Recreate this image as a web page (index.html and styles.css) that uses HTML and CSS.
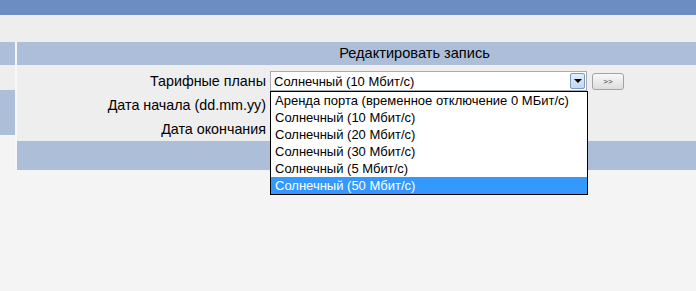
FILE: index.html
```html
<!DOCTYPE html>
<html lang="ru">
<head>
    <meta charset="UTF-8">
    <title>Редактировать запись</title>
    <link rel="stylesheet" href="styles.css">
</head>
<body>
    <div class="topbar"></div>
    <div class="band"></div>

    <div class="layout">
        <div class="side">
            <div class="side-head"></div>
            <div class="side-gap"></div>
            <div class="side-block"></div>
        </div>

        <div class="main">
            <div class="main-head">Редактировать запись</div>

            <div class="form">
                <div class="row">
                    <div class="label">Тарифные планы</div>
                    <div class="field">
                        <div class="select">
                            <span class="select-value">Солнечный (10 Мбит/с)</span>
                            <span class="select-arrow"></span>
                            <ul class="options">
                                <li>Аренда порта (временное отключение 0 МБит/с)</li>
                                <li>Солнечный (10 Мбит/с)</li>
                                <li>Солнечный (20 Мбит/с)</li>
                                <li>Солнечный (30 Мбит/с)</li>
                                <li>Солнечный (5 Мбит/с)</li>
                                <li class="active">Солнечный (50 Мбит/с)</li>
                            </ul>
                        </div>
                        <button class="btn-more" type="button">&gt;&gt;</button>
                    </div>
                </div>
                <div class="row">
                    <div class="label">Дата начала (dd.mm.yy)</div>
                    <div class="field"></div>
                </div>
                <div class="row">
                    <div class="label">Дата окончания</div>
                    <div class="field"></div>
                </div>
            </div>

            <div class="main-foot"></div>
        </div>
    </div>
</body>
</html>
```

FILE: styles.css
```css
body {
    margin: 0;
    min-height: 291px;
    background: #f4f4f4;
    font-family: "Liberation Sans", Arial, sans-serif;
    font-size: 13px;
    color: #000;
}

.topbar {
    height: 15px;
    background: #6b8dc2;
}

.band {
    height: 27px;
    background: #eeeeee;
}

.layout {
    display: flex;
    gap: 2px;
    background: #f5f7fa;
}

.side {
    width: 15px;
    flex-shrink: 0;
    background: #f4f4f4;
}
.side-head {
    height: 23px;
    background: #adbfd8;
}
.side-gap {
    height: 25px;
    background: #eeeeee;
}
.side-block {
    height: 45px;
    background: #adbfd8;
}

.main {
    flex: 1;
    min-width: 0;
    background: #f4f4f4;
}

.main-head {
    height: 23px;
    line-height: 23px;
    padding-left: 116px;
    background: #adbfd8;
    text-align: center;
    font-size: 14.6px;
}

.form {
    background: #eeeeee;
    padding-top: 4px;
}

.row {
    display: flex;
    height: 24px;
    align-items: center;
}

.label {
    width: 249px;
    padding-right: 4px;
    text-align: right;
    flex-shrink: 0;
    font-size: 14.3px;
}

.field {
    display: flex;
    align-items: center;
}

.select {
    position: relative;
    width: 315px;
    height: 18px;
    border: 1px solid #a5acb5;
    background: #fff;
    display: flex;
    align-items: center;
}
.select-value {
    flex: 1;
    padding-left: 3px;
}
.select-arrow {
    width: 15px;
    height: 16px;
    margin-right: 1px;
    border: 1px solid #7a9ac6;
    border-radius: 2px;
    box-sizing: border-box;
    background: linear-gradient(#e3eefb, #c2d7f1);
    position: relative;
}
.select-arrow::after {
    content: "";
    position: absolute;
    left: 3px;
    top: 5px;
    border-left: 4px solid transparent;
    border-right: 4px solid transparent;
    border-top: 4px solid #000;
}

.options {
    position: absolute;
    left: -1px;
    top: 19px;
    width: 316px;
    margin: 0;
    padding: 0;
    list-style: none;
    background: #fff;
    border: 1px solid #000;
    z-index: 2;
}
.options li {
    height: 17px;
    line-height: 17px;
    padding-left: 4px;
    white-space: nowrap;
}
.options li.active {
    background: #3399ff;
    color: #fff;
}

.btn-more {
    margin-left: 5px;
    width: 32px;
    height: 17px;
    padding: 0;
    border: 1px solid #a3a3a3;
    border-radius: 3px;
    background: linear-gradient(#f8f8f8, #dddddd);
    font-family: "Liberation Sans", Arial, sans-serif;
    font-size: 8px;
    color: #333;
}

.main-foot {
    height: 29px;
    background: #adbfd8;
}
```
